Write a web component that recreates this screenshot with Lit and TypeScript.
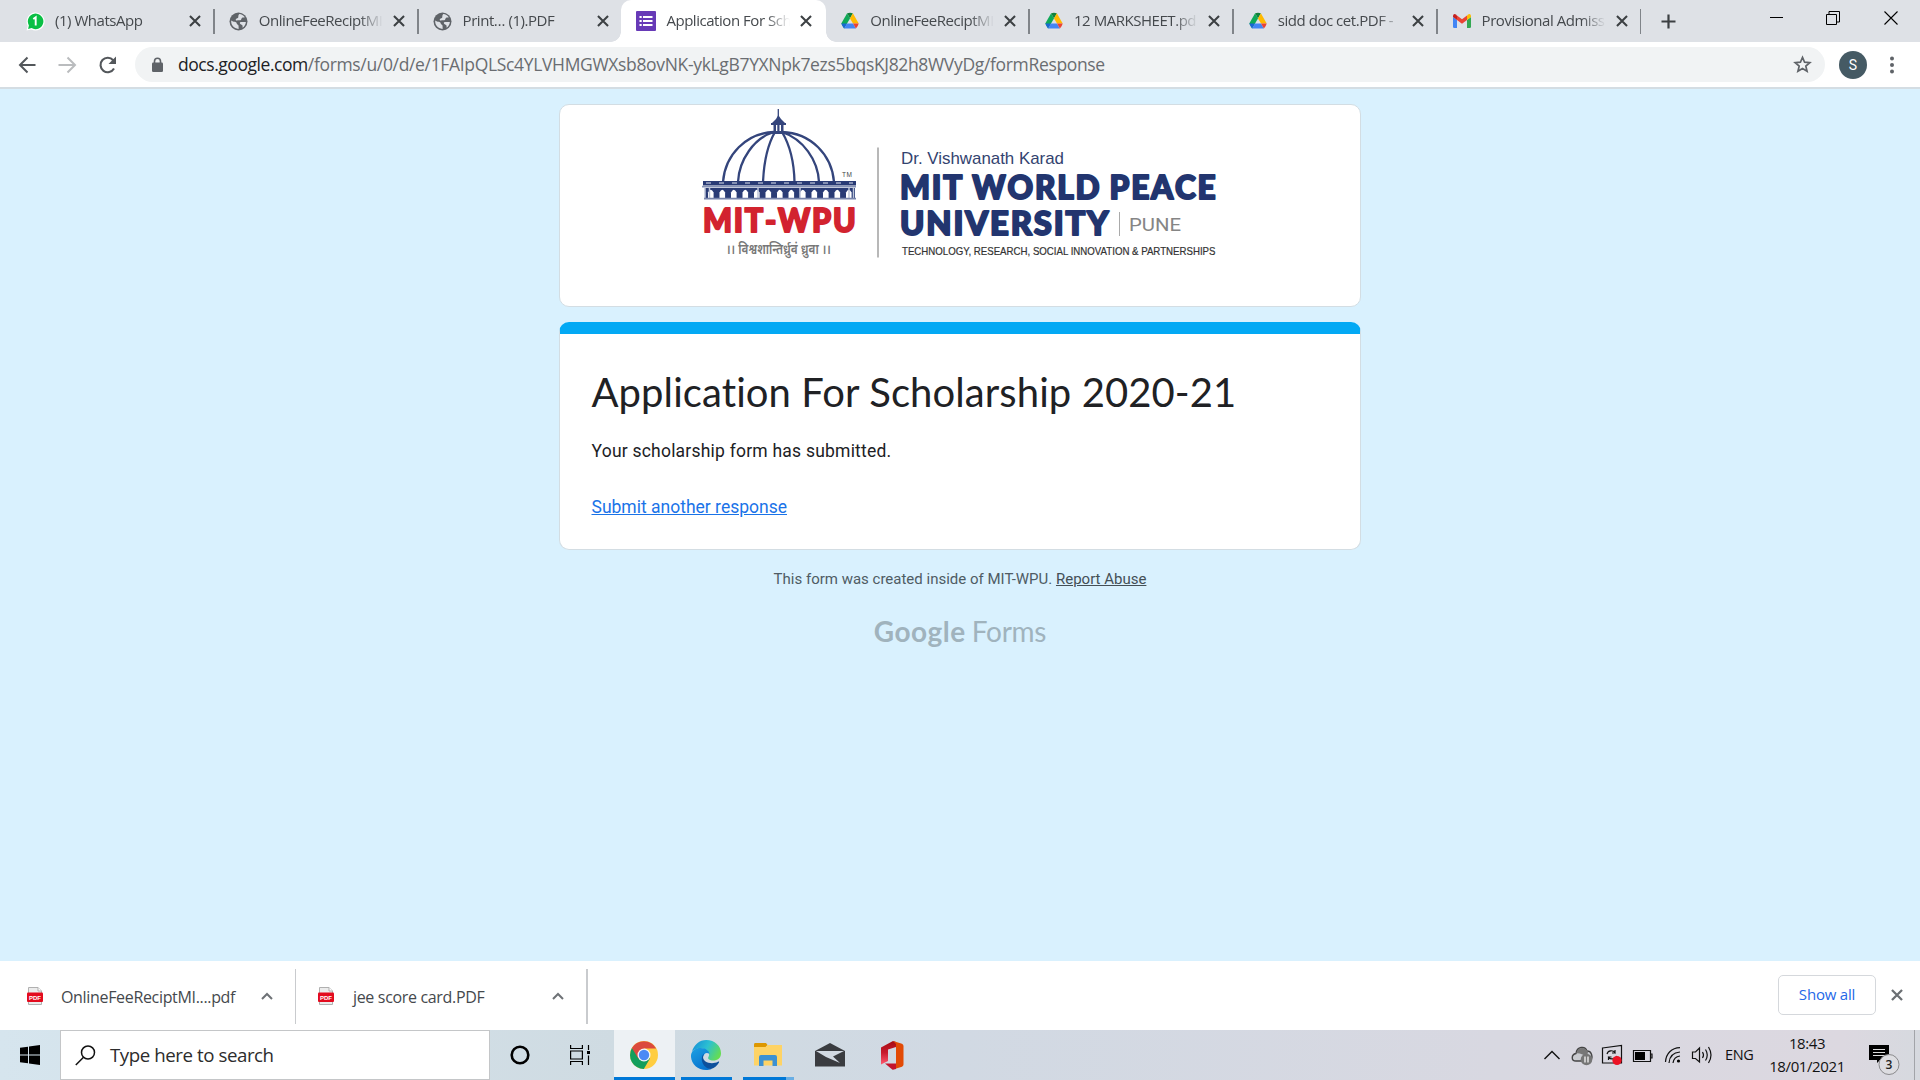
import { LitElement, html, css, svg, nothing } from "lit";
import { customElement, property } from "lit/decorators.js";
import { classMap } from "lit/directives/class-map.js";

const drive = html`<svg width="18" height="18" viewBox="0 0 18 18">
  <path d="M6.1 1.2 9 6.4 3.1 16.6.3 11.6z" fill="#0fa958" />
  <path d="M6.1 1.2Q9 .2 11.9 1.2L9 6.4z" fill="#12813a" />
  <path d="M11.9 1.2 17.7 11.6H12L9 6.4z" fill="#ffba00" />
  <path d="M.3 11.6H6L3.1 16.6Q1.4 14.6.3 11.6z" fill="#1967d2" />
  <path d="M6 11.6h6l2.900 5H3.100z" fill="#4285f4" />
  <path d="M12 11.6h5.700q-.8 3-2.800 5z" fill="#ea4335" />
</svg>`;
const globe = html`<svg width="19" height="19" viewBox="0 0 19 19">
  <circle cx="9.5" cy="9.5" r="9" fill="#5f6368" />
  <path d="M2.200 8.600C4 10.200 5.600 9.600 7 10.300 8.100 10.900 7.400 12 8.500 12.500 9.700 13 9.700 13.900 9.600 16.900 5 17 1.800 13 2.200 8.600z" fill="#dee1e6" />
  <path d="M10.300 2.100C12.500 2.200 14.600 3.400 15.800 5.300 14.800 5.800 13.800 5.300 12.900 6 12 6.800 12.600 7.900 11.200 8.300 9.900 8.600 9.400 7.700 8.200 8.400 7.300 9 6.500 8.300 6.800 7.200 7.200 6 9.200 6.600 9.300 5.200 9.300 4 9.300 3 10.300 2.100z" fill="#dee1e6" />
  <path d="M11 10.300C12.800 9.600 14 10 16.900 9.900 16.700 12.200 15.500 14.400 13.500 15.700 13.700 14.200 13.800 13.400 12.600 12.800 11.300 12.300 10.400 11.400 11 10.300z" fill="#dee1e6" />
</svg>`;
const whatsapp = html`<svg width="19" height="19" viewBox="0 0 19 19">
  <path d="M.6 18.600 1.700 13.800A9 9 0 1 1 5.300 17.400z" fill="#fff" />
  <path d="M2.100 17 2.900 13.400A7.800 7.800 0 1 1 5.600 16.100z" fill="#0abf45" />
  <path d="M7.300 7 9.700 5.400V13.500" fill="none" stroke="#fff" stroke-width="1.900" />
</svg>`;
const forms = html`<svg width="20" height="20" viewBox="0 0 20 20">
  <rect width="20" height="20" rx="1" fill="#673ab7" />
  <path d="M3.500 5h2.200v2H3.500zM7 5h9.500v2H7zM3.500 9h2.200v2H3.500zM7 9h9.500v2H7zM3.500 13h2.200v2H3.500zM7 13h9.500v2H7z" fill="#fff" />
</svg>`;
const gmail = html`<svg width="18" height="14" viewBox="0 0 18 14">
  <path d="M0 3V12.800Q0 14 1.200 14H4V6z" fill="#4285f4" />
  <path d="M18 3V12.800Q18 14 16.800 14H14V6z" fill="#34a853" />
  <path d="M14 1.400V6l4-3V1.800Q17.500-.8 15 .6z" fill="#fbbc04" />
  <path d="M4 1.400V6L0 3V1.800Q.5-.8 3 .6z" fill="#c5221f" />
  <path d="M4 1.400 9 5.200 14 1.400V6L9 9.800 4 6z" fill="#ea4335" />
</svg>`;
const cross = (size: number, width: number, color: string) => html`<svg width=${size} height=${size} viewBox="0 0 10 10">
  <path d="M.8.8 9.200 9.200M9.200.8.8 9.200" fill="none" stroke=${color} stroke-width=${width} />
</svg>`;

interface Tab { icon: unknown; title: string; active?: boolean; line?: boolean }

const tabs: Tab[] = [
  { icon: whatsapp, title: "(1) WhatsApp", line: true },
  { icon: globe, title: "OnlineFeeReciptMI", line: true },
  { icon: globe, title: "Print… (1).PDF" },
  { icon: forms, title: "Application For Sch", active: true },
  { icon: drive, title: "OnlineFeeReciptMI", line: true },
  { icon: drive, title: "12 MARKSHEET.pd", line: true },
  { icon: drive, title: "sidd doc cet.PDF -", line: true },
  { icon: gmail, title: "Provisional Admiss", line: true },
];

@customElement("browser-tab")
class BrowserTab extends LitElement {
  @property({ attribute: false }) tab!: Tab;
  static styles = css`
    :host { display: block; width: 203.800px; height: 42px; flex: none; }
    .tab { position: relative; display: flex; align-items: center; height: 42px; box-sizing: border-box; padding-left: 14px; }
    .tab.active { background: #fff; border-radius: 10px 10px 0 0; margin-left: -1px; padding-left: 15px; }
    .tab.active::before, .tab.active::after { content: ""; position: absolute; bottom: 0; width: 10px; height: 10px; }
    .tab.active::before { left: -10px; background: radial-gradient(circle at 0 0, transparent 9.500px, #fff 10px); }
    .tab.active::after { right: -10px; background: radial-gradient(circle at 100% 0, transparent 9.500px, #fff 10px); }
    .icon { display: flex; justify-content: center; width: 20px; }
    .title { width: 127px; margin-left: 10px; white-space: nowrap; font-size: 15px; letter-spacing: -0.460px; color: #45494d;
      line-height: 22px; padding-bottom: 2px; -webkit-mask-image: linear-gradient(90deg, #000 100px, transparent 124px); }
    .close { display: flex; margin-left: 7px; }
    .line { position: absolute; right: 0; top: 9px; width: 1.500px; height: 25px; background: #808489; }
  `;
  render() {
    const t = this.tab;
    return html`<div class=${classMap({ tab: true, active: !!t.active })}>
      <span class="icon">${t.icon}</span><span class="title">${t.title}</span>
      <span class="close">${cross(12, 1.700, "#3c4043")}</span>
      ${t.line ? html`<span class="line"></span>` : nothing}
    </div>`;
  }
}

@customElement("university-logo")
class UniversityLogo extends LitElement {
  static styles = css`
    :host { display: block; }
    svg { display: block; }
    .brand { font: 900 31.500px Lato, "Open Sans", sans-serif; stroke-width: 1.900px; stroke-linejoin: round; letter-spacing: 1.800px; word-spacing: -1px; font-kerning: none; }
    .navy { fill: #22356f; stroke: #22356f; }
    .red { fill: #d2232f; stroke: #d2232f; }
    .name { font: 17px "Liberation Sans", sans-serif; fill: #33436f; }
    .city { font: 19px Roboto, sans-serif; fill: #858585; }
    .tag { font: 10.500px "Liberation Sans", sans-serif; fill: #333; stroke: #333; stroke-width: .2px; }
    .motto { font: 600 13.500px "Noto Sans Devanagari", "Noto Sans", sans-serif; fill: #777; }
    .tm { font: 6.500px "Liberation Sans", sans-serif; fill: #444; }
  `;
  render() {
    const arches = Array.from({ length: 13 }, (_, i) => 708 + i * 11.500);
    return html`<svg width="800" height="201" viewBox="560 105 800 201">
      <g fill="none" stroke="#34457c" stroke-width="2.300">
        <path d="M723 182C725 155 746 133 774 132M738 182C739 160 754 138 774 132M763 182C764 160 768 144 775 132M794.500 182C794 158 788 142 782 132M819 182C818 160 803 139 782 132M834 182C832 155 811 133 782 132" />
        <path d="M778.300 109V119" stroke-width="1.300" />
      </g>
      <path d="M778.300 115 781 119 785 123H772L776 119zM771 123H786V125H771zM773.500 125H776V132H773.500zM777.300 125H779.500V132H777.300zM781 125H783.500V132H781zM772 131H785V134H772z" fill="#34457c" />
      <path d="M703 181H856V185.500H703z" fill="#293b75" />
      <path d="M706 183H853" stroke="#dfe5f0" stroke-width="1" stroke-dasharray="5 8" />
      <path d="M702 186.700H856" stroke="#8794b7" stroke-width="1.700" />
      <path d="M705 188H855V199H705z" fill="#293b75" />
      ${arches.map((x) => svg`<path d="M${x} 198V192.500Q${x + 2.800} 187 ${x + 5.600} 192.500V198z" fill="#fff" />`)}
      <path d="M705 188V198M709.500 188V198M758 188V198M800 188V198M849 188V198M853.500 188V198" stroke="#bcc5d8" stroke-width="1.500" />
      <path d="M704 198.700H856" stroke="#7885ac" stroke-width="1.700" />
      <text class="tm" x="842" y="177" textLength="10">TM</text>
      <text class="brand red" x="703" y="231.500" textLength="154.500" lengthAdjust="spacingAndGlyphs">MIT-WPU</text>
      <text class="motto" x="726" y="253.500" textLength="105" lengthAdjust="spacingAndGlyphs">।। विश्वशान्तिर्ध्रुवं ध्रुवा ।।</text>
      <path d="M878 147.500V257.500" stroke="#929292" stroke-width="1.300" />
      <text class="name" x="901" y="164.300" textLength="163" lengthAdjust="spacingAndGlyphs">Dr. Vishwanath Karad</text>
      <text class="brand navy" x="900" y="199.200" textLength="317.500" lengthAdjust="spacingAndGlyphs">MIT WORLD PEACE</text>
      <text class="brand navy" x="900" y="234.700" textLength="210.500" lengthAdjust="spacingAndGlyphs">UNIVERSITY</text>
      <path d="M1119.500 212V236" stroke="#aaa" stroke-width="1" />
      <text class="city" x="1129" y="230.700" textLength="52" lengthAdjust="spacingAndGlyphs">PUNE</text>
      <text class="tag" x="902" y="255" textLength="313.500" lengthAdjust="spacingAndGlyphs">TECHNOLOGY, RESEARCH, SOCIAL INNOVATION &amp; PARTNERSHIPS</text>
    </svg>`;
  }
}

const pdf = html`<svg width="16" height="18" viewBox="0 0 16 18">
  <path d="M1.500.5H11L14.500 4V17.500H1.500z" fill="#ececec" stroke="#b0b0b0" />
  <path d="M11 .5V4H14.500" fill="#fff" stroke="#b0b0b0" />
  <rect y="5.500" width="16" height="9.500" rx="1" fill="#e30b1e" />
  <text class="pdf" x="8" y="12.800" text-anchor="middle">PDF</text>
</svg>`;
const up = html`<svg width="12" height="8" viewBox="0 0 12 8"><path d="M1 7 6 2 11 7" fill="none" stroke="#6e7276" stroke-width="2" /></svg>`;

@customElement("app-root")
class AppRoot extends LitElement {
  static styles = css`
    :host { display: flex; flex-direction: column; width: 1920px; height: 1080px; overflow: hidden; font-family: "Open Sans", "Noto Sans", sans-serif; }
    svg { display: block; flex: none; }
    .tabs { display: flex; align-items: center; height: 42px; flex: none; background: #dee1e6; padding-left: 11px; }
    .plus { margin-left: 20px; }
    .win { display: flex; align-items: flex-start; margin-left: auto; gap: 44px; padding: 0 22px 6px 0; }
    .min { margin-right: -2px; }
    .bar { display: flex; align-items: center; height: 45px; flex: none; background: #fff; padding-left: 17px; border-bottom: 2px solid #d4dde3; box-sizing: content-box; }
    .nav { display: flex; align-items: center; gap: 20px; width: 118px; }
    .omni { display: flex; align-items: center; width: 1690px; height: 35px; border-radius: 18px; background: #f1f3f4; box-sizing: border-box; padding: 0 13px 0 15px; }
    .url { margin-left: 13px; flex: 1; font-size: 17.500px; letter-spacing: -0.335px; color: #6a6d71; line-height: 29px; padding-bottom: 1px; white-space: nowrap; }
    .host { color: #202124; letter-spacing: -0.450px; }
    .avatar { display: flex; align-items: center; justify-content: center; width: 28px; height: 28px; border-radius: 50%; background: #455a64; color: #fff; font: 14px Roboto, sans-serif; margin: 0 22px 0 14px; }
    .page { flex: 1; background: #d9f1fe; display: flex; flex-direction: column; align-items: center; padding-top: 15px; }
    .card { width: 800px; border: 1px solid #d3dde3; border-radius: 10px; background: #fff; overflow: hidden; }
    .form { width: 802px; height: 228px; margin-top: 15px; box-sizing: border-box; border: 1px solid #d3dde3; border-top: 12px solid #03a9f4; border-radius: 10px; background: #fff; padding: 33px 31px 0 31.500px; }
    .title { margin: 0; font: 40px/50px Lato, sans-serif; letter-spacing: 0.090px; color: #202124; white-space: nowrap; }
    .note { margin: 22px 0 0; font: 17.500px/25px Roboto, sans-serif; letter-spacing: 0.220px; color: #202124; }
    .again { margin: 31px 0 0; font: 17.500px/25px Roboto, sans-serif; color: #1a73e8; text-decoration: underline; width: max-content; }
    .foot { margin-top: 19px; font: 15px/20px Roboto, sans-serif; color: #4f5c64; white-space: nowrap; }
    .foot u { color: #444f56; }
    .brand { display: flex; align-items: baseline; margin-top: 24px; line-height: 36px; font-family: Lato, sans-serif; font-size: 28px; color: #a0b3bd; }
    .brand b { font-weight: 700; margin-right: 6px; letter-spacing: 0.500px; }
    .brand span { letter-spacing: -0.300px; }
    .shelf { display: flex; height: 69px; flex: none; background: #fff; }
    .item { display: flex; align-items: center; box-sizing: border-box; height: 55px; margin-top: 8px; padding: 0 22px 0 27px; border-right: 1.500px solid #c9cbce; }
    .item svg { margin-bottom: 2px; }
    .first { width: 296px; }
    .second { width: 292px; padding-left: 22px; border-right-width: 2px; }
    .file { margin-left: 19px; flex: 1; font-size: 16px; letter-spacing: -0.330px; color: #45494d; white-space: nowrap; }
    .first .file { margin-left: 18px; }
    .pdf { font: 700 6px "Liberation Sans", sans-serif; fill: #fff; }
    .all { display: flex; align-items: center; justify-content: center; width: 98px; height: 40px; box-sizing: border-box; border: 1px solid #d5d8dc; border-radius: 5px; margin: 14px 15px 0 auto; color: #2468e8; font-size: 15px; font-weight: 500; letter-spacing: -0.200px; padding-bottom: 2px; }
    .shut { margin: 28px 17px 0 0; }
    .task { display: flex; height: 50px; flex: none; background: linear-gradient(90deg, #d6e5ee 0, #cfdbe2 32%, #d1d9e3 50%, #d8d8e1 78%, #dcd8e0 96%, #d6d9df); }
    .start { display: flex; align-items: center; justify-content: center; width: 60px; }
    .search { display: flex; align-items: center; width: 430px; box-sizing: border-box; border: 1px solid #c4c6c8; background: #fff; padding-left: 14px; gap: 14px; font-size: 18.700px; letter-spacing: -0.440px; color: #2c2c2c; }
    .search span { padding-bottom: 2px; }
    .app { display: flex; align-items: center; justify-content: center; box-sizing: border-box; width: 60px; }
    .cols { width: 59px; padding-left: 1px; }
    .on { border-bottom: 3px solid #0078d7; padding-top: 3px; }
    .chrome { width: 61px; margin-left: 5px; padding-right: 2px; background: #edf1f4; }
    .edge { width: 51px; margin: 0 11px 0 6px; padding-right: 1px; }
    .files { width: 51px; padding-right: 2px; border-image: linear-gradient(90deg, #0078d7 41px, #69aee4 41px) 3; }
    .mail { width: 72px; }
    .office { width: 52px; }
    .tray { display: flex; align-items: center; margin-left: auto; font-size: 15px; color: #111; }
    .lang { width: 30px; letter-spacing: -0.400px; margin-left: -1px; font-size: 14.500px; padding-bottom: 1px; }
    .clock { width: 92px; margin-left: 6px; text-align: center; line-height: 23px; letter-spacing: -0.400px; white-space: nowrap; }
    .bell { margin: 10px 0 0 15px; }
    .count { font: 600 12px "Open Sans", sans-serif; fill: #222; }
    .desk { height: 50px; width: 5px; border-left: 1px solid #a2a4a9; margin-left: 14px; }
  `;

  render() {
    return html`
      <div class="tabs">
        ${tabs.map((t) => html`<browser-tab .tab=${t}></browser-tab>`)}
        <svg class="plus" width="15" height="15" viewBox="0 0 15 15"><path d="M7.500.5V14.500M.5 7.500H14.500" stroke="#3c4043" stroke-width="2.200" /></svg>
        <div class="win">
          <svg class="min" width="14" height="14" viewBox="0 0 14 14"><path d="M0 6.500H13" stroke="#000" /></svg>
          <svg width="14" height="14" viewBox="0 0 14 14"><path d="M.5 3.500H10.500V13.500H.5zM3 3V.5H13.500V11H11" fill="none" stroke="#000" /></svg>
          <svg width="14" height="14" viewBox="0 0 14 14"><path d="M.5.5 13.500 13.500M13.500.5.5 13.500" stroke="#000" stroke-width="1.100" /></svg>
        </div>
      </div>

      <div class="bar">
        <div class="nav">
          <svg width="20" height="20" viewBox="0 0 20 20"><path d="M18.500 10H3.500M10.500 2.500 3 10 10.500 17.500" fill="none" stroke="#53575b" stroke-width="2" /></svg>
          <svg width="20" height="20" viewBox="0 0 20 20"><path d="M1.500 10H17.500M10.500 2.500 18 10 10.500 17.500" fill="none" stroke="#babcbe" stroke-width="2" /></svg>
          <svg width="20" height="20" viewBox="0 0 20 20"><path d="M17 13.500A7.200 7.200 0 1 1 16.200 5.300" fill="none" stroke="#53575b" stroke-width="2.100" /><path d="M19 1.500V9H11.500z" fill="#53575b" /></svg>
        </div>
        <div class="omni">
          <svg width="15" height="16" viewBox="0 0 14 16"><path d="M4 6V4.200A3 3 0 0 1 10 4.200V6" fill="none" stroke="#5f6368" stroke-width="1.600" /><rect x="1.500" y="5.500" width="11" height="9.500" rx="1.300" fill="#5f6368" /></svg>
          <span class="url"><span class="host">docs.google.com</span>/forms/u/0/d/e/1FAIpQLSc4YLVHMGWXsb8ovNK-ykLgB7YXNpk7ezs5bqsKJ82h8WVyDg/formResponse</span>
          <svg width="19" height="19" viewBox="0 0 20 20"><path d="M10 2.500 12.200 7.600 17.700 8.100 13.500 11.700 14.800 17.100 10 14.200 5.200 17.100 6.500 11.700 2.300 8.100 7.800 7.600z" fill="none" stroke="#5f6368" stroke-width="1.800" /></svg>
        </div>
        <div class="avatar">S</div>
        <svg width="6" height="18" viewBox="0 0 6 18"><g fill="#5f6368"><circle cx="3" cy="2.500" r="2" /><circle cx="3" cy="9" r="2" /><circle cx="3" cy="15.500" r="2" /></g></svg>
      </div>

      <div class="page">
        <div class="card"><university-logo></university-logo></div>
        <div class="form">
          <h1 class="title">Application For Scholarship 2020-21</h1>
          <p class="note">Your scholarship form has submitted.</p>
          <p class="again">Submit another response</p>
        </div>
        <div class="foot">This form was created inside of MIT-WPU. <u>Report Abuse</u></div>
        <div class="brand"><b>Google</b><span>Forms</span></div>
      </div>

      <div class="shelf">
        <div class="item first">${pdf}<span class="file">OnlineFeeReciptMI....pdf</span>${up}</div>
        <div class="item second">${pdf}<span class="file">jee score card.PDF</span>${up}</div>
        <div class="all">Show all</div>
        <div class="shut">${cross(12, 1.900, "#6b6f73")}</div>
      </div>

      <div class="task">
        <div class="start"><svg width="20" height="20" viewBox="0 0 20 20"><path d="M0 2.800 8 1.700V9.500H0zM9 1.500 20 0V9.500H9zM0 10.500H8V18.300L0 17.200zM9 10.500H20V20L9 18.500z" /></svg></div>
        <div class="search">
          <svg width="21" height="21" viewBox="0 0 21 21"><circle cx="13" cy="7.500" r="6.500" fill="none" stroke="#111" stroke-width="1.500" /><path d="M8.500 12.300.8 20" stroke="#111" stroke-width="1.500" /></svg>
          <span>Type here to search</span>
        </div>
        <div class="app"><svg width="20" height="20" viewBox="0 0 20 20"><circle cx="10" cy="10" r="8.300" fill="none" stroke="#000" stroke-width="2.600" /></svg></div>
        <div class="app cols"><svg width="21" height="20" viewBox="0 0 21 20"><path d="M.6 0V3.500H12.400V0M.6 20V16.500H12.400V20M.6 6H12.400V14H.6zM18.500 0V5M18.500 10.500V20" fill="none" stroke="#000" stroke-width="1.200" /><path d="M17 6H20V9H17z" /></svg></div>
        <div class="app on chrome">
          <svg width="28" height="28" viewBox="0 0 28 28">
            <circle cx="14" cy="14" r="14" fill="#ffcd40" />
            <path d="M14 14 20 17.500 13.800 28A14 14 0 0 1 1.900 7z" fill="#139e5b" />
            <path d="M14 14 8.300 17.500 1.900 7A14 14 0 0 1 26.200 7.500H14z" fill="#db4a3d" />
            <circle cx="14" cy="14" r="6.500" fill="#f4f6f8" /><circle cx="14" cy="14" r="5.200" fill="#4b8af5" />
          </svg>
        </div>
        <div class="app on edge">
          <svg width="30" height="30" viewBox="0 0 30 30">
            <defs>
              <linearGradient id="eg" x1="0" x2="1" y1=".2" y2=".6"><stop stop-color="#1690d8" /><stop offset=".5" stop-color="#2cc0d2" /><stop offset="1" stop-color="#65dd52" /></linearGradient>
              <linearGradient id="eb" x1="0" x2=".6" y1="0" y2="1"><stop stop-color="#1ca0e2" /><stop offset="1" stop-color="#0873cf" /></linearGradient>
            </defs>
            <path d="M.8 12C3 4.500 8.500 0 15.300 0 23.700 0 30 6 30 13.200 30 18 26.500 20.500 22.300 20.500 18.500 20.500 16.500 18.800 17.300 17.300 19.500 14 17.500 9.500 11 8.500 6 8 2 9.500.8 12z" fill="url(#eg)" />
            <path d="M0 15C.7 10.500 4.500 8 9.500 8 15 8 18.300 11 18.500 14 15.500 11.500 12 14 12 18 12 23 16.500 28 20.500 29 19 29.700 17 30 15 30 6 30-.6 23 0 15z" fill="url(#eb)" />
            <path d="M12.800 13.800C9 17 10.500 28 20 29 23.500 28 26.500 25.500 28 22.600 28.400 21.600 27.700 21.400 27 21.800 20 25.300 11.800 21.800 12 17z" fill="#0d509c" />
          </svg>
        </div>
        <div class="app on files">
          <svg width="28" height="24" viewBox="0 0 28 24">
            <path d="M0 1.500Q0 0 1 0H12L13.500 2 12 4H0z" fill="#dd9700" /><path d="M0 4H11.500L13.500 2H28V22.500H0z" fill="#fed365" />
            <path d="M5 23V14Q5 12 7 12H21Q23 12 23 14V23H18.500V17.500H9.500V23z" fill="#3c91d2" />
          </svg>
        </div>
        <div class="app mail">
          <svg width="30" height="24" viewBox="0 0 30 24"><path d="M0 8 15 0 30 8V23.500H0z" fill="#3a3c40" /><path d="M1 8H29L18 13.500 25 20 11 14z" fill="#d2d9e2" /></svg>
        </div>
        <div class="app office">
          <svg width="24" height="29" viewBox="0 0 24 29">
            <defs><linearGradient id="of" y2="1" x2="0"><stop stop-color="#a60b12" /><stop offset=".5" stop-color="#c81a2d" /><stop offset="1" stop-color="#ff5a70" /></linearGradient></defs>
            <path d="M1 6.500 13 0 16 1V6L8 8.500V20L1 23.500z" fill="url(#of)" />
            <path d="M13 0 22 2.800Q23.500 3.500 23.500 5V23.500Q23.500 25 22 25.700L13 28.500 16 26V3z" fill="#e24a05" />
            <path d="M5 22.500H16V28L12.500 28.800z" fill="#c3142c" />
          </svg>
        </div>
        <div class="tray">
          <svg width="186" height="30" viewBox="1540 1040 186 30" fill="none" stroke="#111" stroke-width="1.400">
            <path d="M1544.500 1059 1552 1051.500 1559.500 1059" />
            <path d="M1576 1061C1571 1061 1571 1054.500 1576 1053.500 1577 1046.500 1585 1045.500 1587 1051 1592 1051 1593.500 1058 1590 1061z" fill="#c9cbd0" stroke="#444" />
            <path d="M1573.500 1054.500C1577 1052.500 1581 1053 1587 1057L1588 1052C1585 1046 1578 1047 1576.500 1053z" fill="#777" stroke="none" />
            <circle cx="1586.500" cy="1059.500" r="5.800" fill="#767676" stroke="none" /><path d="M1585 1056.500V1062.500M1588 1056.500V1062.500" stroke="#fff" stroke-width="1.200" />
            <path d="M1602.500 1048 1621.500 1045.500V1063H1602.500z" stroke-width="1.200" />
            <path d="M1607 1054C1608 1050 1613 1050 1615 1052.500V1050M1615 1053H1612M1617 1056C1616 1059 1611 1060 1608.500 1057.500V1060M1608.500 1057H1611.500" stroke-width="1.200" />
            <circle cx="1617" cy="1060.500" r="4.600" fill="#ec1224" stroke="none" />
            <path d="M1633.500 1050.500H1650.500V1061.500H1633.500zM1650.500 1054H1652V1058H1650.500" stroke-width="1.200" /><path d="M1635 1052H1645V1060H1635z" fill="#000" stroke="none" />
            <path d="M1665.500 1062C1666 1053.500 1671.500 1048 1680 1047.700M1669 1063C1669.500 1056.500 1673 1052.500 1680 1052M1673 1063C1673.500 1059 1675.500 1056.500 1680 1056" stroke-width="1.200" /><circle cx="1678.500" cy="1061" r="1.600" fill="#000" stroke="none" />
            <path d="M1692.500 1052H1695.500L1699.500 1048V1062L1695.500 1058.500H1692.500zM1702.500 1052Q1704.500 1055 1702.500 1058M1705.500 1049.500Q1709 1055 1705.500 1060.500M1708.500 1047Q1713.500 1055 1708.500 1063" stroke-width="1.200" />
          </svg>
          <span class="lang">ENG</span>
          <div class="clock">18:43<br />18/01/2021</div>
          <svg class="bell" width="32" height="32" viewBox="1868 1044 32 32">
            <path d="M1869 1045H1889V1060H1880L1877 1063V1060H1869z" /><path d="M1873 1049.500H1885M1873 1052.500H1885M1873 1055.500H1885" stroke="#ddd" stroke-width="1" />
            <circle cx="1889" cy="1064.500" r="10" fill="#dddde1" stroke="#8a8a8d" /><text class="count" x="1889" y="1069" text-anchor="middle">3</text>
          </svg>
          <span class="desk"></span>
        </div>
      </div>
    `;
  }
}
